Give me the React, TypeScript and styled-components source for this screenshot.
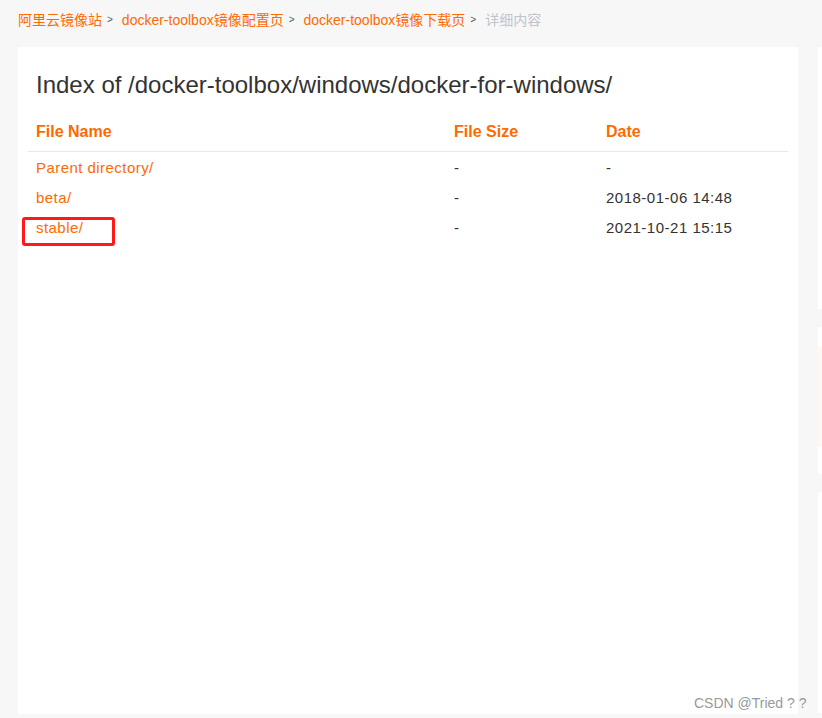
import React from 'react';
import styled, { createGlobalStyle } from 'styled-components';

const GlobalStyle = createGlobalStyle`
  html, body {
    margin: 0;
    padding: 0;
    background: #f7f7f7;
  }
  body {
    font-family: "Liberation Sans", Arial, "Noto Sans CJK SC", sans-serif;
    color: #333;
  }
`;

const Page = styled.div`
  position: relative;
  display: flex;
  gap: 20px;
  padding-left: 18px;
  height: 718px;
  overflow: hidden;
`;

const Main = styled.div`
  width: 780px;
  flex-shrink: 0;
`;

const Breadcrumb = styled.nav`
  display: flex;
  align-items: center;
  padding-top: 10px;
  height: 20px;
  margin-bottom: 17px;
  font-size: 14px;
  line-height: 20px;
`;

const Crumb = styled.a<{ $current?: boolean }>`
  color: ${p => (p.$current ? '#c0c4cc' : '#ff6a00')};
  text-decoration: none;
  white-space: nowrap;
`;

const Separator = styled.span`
  margin: 0 9px 0 5px;
  font-size: 10px;
  color: #48576a;
`;

const Card = styled.section`
  position: relative;
  box-sizing: border-box;
  height: 667px;
  padding: 10px;
  background: #fff;
`;

const Title = styled.h1`
  margin: 14px 8px 0;
  font-size: 24px;
  line-height: 28px;
  font-weight: normal;
  color: #333;
`;

const Table = styled.table`
  width: 760px;
  margin-top: 15px;
  border-collapse: collapse;
  table-layout: fixed;
`;

const Col = styled.col<{ $width: number }>`
  width: ${p => p.$width}px;
`;

const Th = styled.th`
  padding: 8px 8px 9px;
  text-align: left;
  font-size: 16px;
  line-height: 20px;
  font-weight: bold;
  color: #ff6a00;
  border-bottom: 1px solid #e8e8e8;
`;

const Td = styled.td`
  padding: 6px 8px 4px;
  font-size: 15px;
  line-height: 20px;
  color: #333;
  white-space: nowrap;
`;

const DateCell = styled(Td)`
  letter-spacing: 0.5px;
`;

const Link = styled.a`
  color: #ff6a00;
  text-decoration: none;
  letter-spacing: 0.45px;
`;

const Highlight = styled.div`
  position: absolute;
  left: 4px;
  top: 170px;
  width: 93px;
  height: 29px;
  box-sizing: border-box;
  border: 3px solid #ff1a1a;
  border-radius: 3px;
  pointer-events: none;
`;

const Sidebar = styled.aside`
  display: flex;
  flex-direction: column;
  gap: 18px;
  width: 260px;
  padding-top: 47px;
  flex-shrink: 0;
`;

const SideBlock = styled.div<{ $height: number; $tint?: boolean }>`
  height: ${p => p.$height}px;
  background: ${p => (p.$tint ? 'linear-gradient(#fff 0 20px, #fff8f2 20px 120px, #fff 120px)' : '#fff')};
`;

const Watermark = styled.div`
  position: absolute;
  left: 694px;
  top: 694px;
  font-size: 14px;
  line-height: 18px;
  color: #999;
  white-space: nowrap;
`;

const rows = [
  { name: 'Parent directory/', size: '-', date: '-' },
  { name: 'beta/', size: '-', date: '2018-01-06 14:48' },
  { name: 'stable/', size: '-', date: '2021-10-21 15:15' },
];

export default function App() {
  return (
    <>
      <GlobalStyle />
      <Page>
        <Main>
          <Breadcrumb>
            <Crumb href="#">阿里云镜像站</Crumb>
            <Separator>&gt;</Separator>
            <Crumb href="#">docker-toolbox镜像配置页</Crumb>
            <Separator>&gt;</Separator>
            <Crumb href="#">docker-toolbox镜像下载页</Crumb>
            <Separator>&gt;</Separator>
            <Crumb $current>详细内容</Crumb>
          </Breadcrumb>
          <Card>
            <Title>Index of /docker-toolbox/windows/docker-for-windows/</Title>
            <Table>
              <colgroup>
                <Col $width={418} />
                <Col $width={152} />
                <Col $width={190} />
              </colgroup>
              <thead>
                <tr>
                  <Th>File Name</Th>
                  <Th>File Size</Th>
                  <Th>Date</Th>
                </tr>
              </thead>
              <tbody>
                {rows.map(r => (
                  <tr key={r.name}>
                    <Td>
                      <Link href="#">{r.name}</Link>
                    </Td>
                    <Td>{r.size}</Td>
                    <DateCell>{r.date}</DateCell>
                  </tr>
                ))}
              </tbody>
            </Table>
            <Highlight />
          </Card>
        </Main>
        <Sidebar>
          <SideBlock $height={262} />
          <SideBlock $height={147} $tint />
          <SideBlock $height={221} />
        </Sidebar>
        <Watermark>CSDN @Tried ? ?</Watermark>
      </Page>
    </>
  );
}
